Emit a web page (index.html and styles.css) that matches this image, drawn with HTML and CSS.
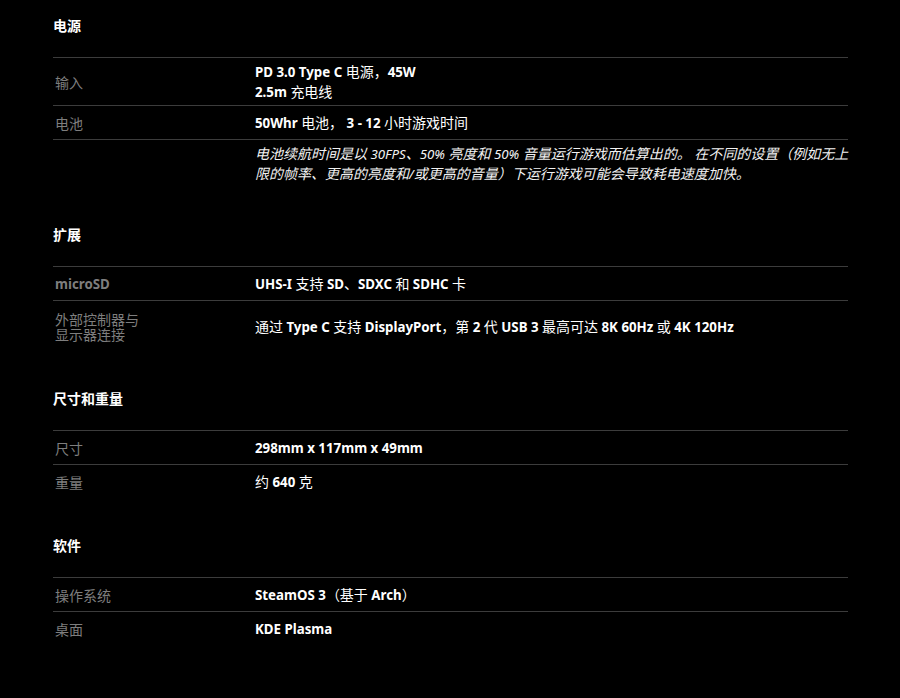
FILE: index.html
```html
<!DOCTYPE html>
<html lang="zh-CN">
<head>
<meta charset="utf-8">
<title>规格</title>
<link rel="stylesheet" href="styles.css">
</head>
<body>
<main class="specs">
  <section class="group">
    <h2 class="group-title">电源</h2>
    <div class="row">
      <div class="label">输入</div>
      <div class="value">PD 3.0 Type C <span class="zh">电源，</span>45W<br>2.5m <span class="zh">充电线</span></div>
    </div>
    <div class="row">
      <div class="label">电池</div>
      <div class="value">50Whr <span class="zh">电池，</span> 3 - 12 <span class="zh">小时游戏时间</span></div>
    </div>
    <div class="row row-note">
      <div class="label"></div>
      <div class="value note"><span class="zh">电池续航时间是以</span> 30FPS<span class="zh">、</span>50% <span class="zh">亮度和</span> 50% <span class="zh">音量运行游戏而估算出的。</span> <span class="zh">在不同的设置（例如无上限的帧率、更高的亮度和</span>/<span class="zh">或更高的音量）下运行游戏可能会导致耗电速度加快。</span></div>
    </div>
  </section>

  <section class="group">
    <h2 class="group-title">扩展</h2>
    <div class="row">
      <div class="label label-latin">microSD</div>
      <div class="value">UHS-I <span class="zh">支持</span> SD<span class="zh">、</span>SDXC <span class="zh">和</span> SDHC <span class="zh">卡</span></div>
    </div>
    <div class="row row-tall">
      <div class="label label-small">外部控制器与<br>显示器连接</div>
      <div class="value"><span class="zh">通过</span> Type C <span class="zh">支持</span> DisplayPort<span class="zh">，第</span> 2 <span class="zh">代</span> USB 3 <span class="zh">最高可达</span> 8K 60Hz <span class="zh">或</span> 4K 120Hz</div>
    </div>
  </section>

  <section class="group">
    <h2 class="group-title">尺寸和重量</h2>
    <div class="row">
      <div class="label">尺寸</div>
      <div class="value">298mm x 117mm x 49mm</div>
    </div>
    <div class="row">
      <div class="label">重量</div>
      <div class="value"><span class="zh">约</span> 640 <span class="zh">克</span></div>
    </div>
  </section>

  <section class="group">
    <h2 class="group-title">软件</h2>
    <div class="row">
      <div class="label">操作系统</div>
      <div class="value">SteamOS 3<span class="zh">（基于</span> Arch<span class="zh">）</span></div>
    </div>
    <div class="row">
      <div class="label">桌面</div>
      <div class="value">KDE Plasma</div>
    </div>
  </section>
</main>
</body>
</html>
```
FILE: styles.css
```css
html, body {
  margin: 0;
  padding: 0;
  background: #000;
}

body {
  font-family: "Noto Sans", "Noto Sans CJK SC", sans-serif;
  font-size: 14px;
  color: #fff;
}

.specs {
  width: 795px;
  padding: 15px 0 0 53px;
}

.group + .group {
  margin-top: 37px;
}

.group-title {
  margin: 0 0 22px;
  font-family: "Noto Sans CJK SC", sans-serif;
  font-size: 14px;
  line-height: 20px;
  font-weight: 700;
  color: #fff;
}

.row {
  display: grid;
  grid-template-columns: 202px 1fr;
  align-items: center;
  min-height: 34px;
  box-sizing: border-box;
  padding: 4px 0 3px;
  border-top: 1px solid #3c3c3c;
}

.row-note {
  align-items: start;
  padding: 5px 0 3px;
}

.row-tall {
  min-height: 51px;
}

.label {
  padding-left: 2px;
  color: #7e7e7e;
  font-family: "Noto Sans CJK SC", sans-serif;
  font-weight: 400;
  font-size: 14px;
  line-height: 20px;
}

.label-latin {
  font-family: "Noto Sans", sans-serif;
  font-weight: 700;
  font-size: 13.3px;
}

.label-small {
  line-height: 15px;
}

.value {
  color: #fff;
  font-weight: 700;
  font-size: 13.3px;
  line-height: 20px;
}

.zh {
  font-family: "Noto Sans CJK SC", sans-serif;
  font-weight: 400;
  font-size: 14px;
  line-height: 1;
}

.note {
  margin-right: -8px;
  font-weight: 400;
  font-style: italic;
  color: #f2f2f2;
  line-height: 19.5px;
}
```
